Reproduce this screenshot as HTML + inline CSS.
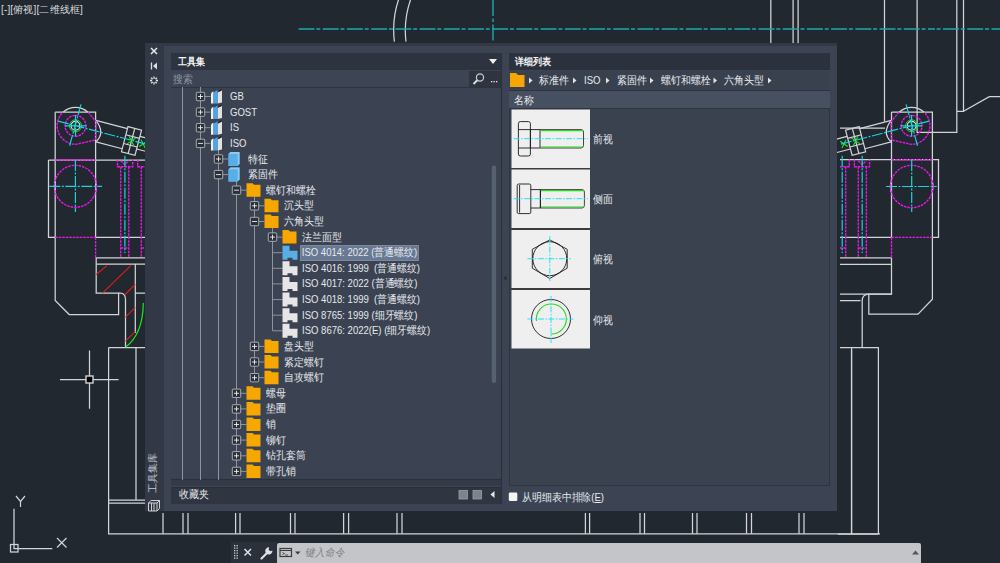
<!DOCTYPE html>
<html><head><meta charset="utf-8">
<style>
*{box-sizing:border-box}
html,body{margin:0;padding:0}
body{width:1000px;height:563px;overflow:hidden;background:#212830;position:relative;font-family:"Liberation Sans",sans-serif;color:#e8eaee}
.abs{position:absolute}
svg.ov{position:absolute;left:0;top:0}
.vlabel{position:absolute;left:1px;top:3.5px;letter-spacing:0.15px;font-size:10px;line-height:12px;color:#d8dadd;white-space:nowrap}
#pal{position:absolute;left:145px;top:43px;width:692px;height:468px;background:#323845}
#body{position:absolute;left:164px;top:46px;width:673px;height:465px;background:#3c4454}
.bar{position:absolute}
.txt{position:absolute;white-space:nowrap;font-size:10.6px;line-height:13px;color:#e8eaee;transform:scaleX(0.9);transform-origin:0 50%}
.txt.b{font-weight:bold;color:#f4f4f4;font-size:10px}
.tr{position:absolute;white-space:nowrap;font-size:10.6px;line-height:13px;color:#e6e8ec;transform:scaleX(0.9);transform-origin:0 50%}
.tr.sel{background:#697993;border:1px solid #7a89a2;padding:0 1px;margin-left:-2px;height:15.5px;line-height:13.5px;margin-top:-1.2px}
</style></head>
<body>
<svg class="ov" width="1000" height="563" viewBox="0 0 1000 563">
<defs>
<g id="arm" fill="none">
 <g stroke="#d2d4d8" stroke-width="1.2">
  <path d="M18.3,-10.4H51M23.8,10.4H51"/>
  <path d="M18.3,-10.4Q31,-1 23.8,10.4"/>
  <path d="M51,-12.5H65V13.5H51Z M58,-12.5V13.5 M51,-4H65 M51,5H65"/>
  <path d="M65,-6H85M65,7H85"/>
 </g>
 <g stroke="#1ee81e" stroke-width="1.1"><path d="M54.5,-3.5L61.5,4.5M61.5,-3.5L54.5,4.5M67,-3L73,4M73,-3L67,4"/></g>
</g>
<g id="cam" fill="none">
 <path d="M63,112.2A18.6,18.6 0 0 1 88,112.2" stroke="#d2d4d8" stroke-width="1.2"/>
 <g stroke="#ea16ea" stroke-width="1.35" stroke-dasharray="2.6 0.9">
  <path d="M88,112.2L96,121.5L95.5,140L76,144.3A18.6,18.6 0 0 1 63,112.2"/>
  <circle cx="75.5" cy="125.8" r="10.4"/>
 </g>
 <circle cx="75.5" cy="125.8" r="6" stroke="#2ad82a" stroke-width="1"/>
 <circle cx="75.5" cy="125.8" r="4.4" stroke="#e8e8e8" stroke-width="1.1"/>
 <g stroke="#16d6dc" stroke-width="1.2" stroke-dasharray="11 1.5 2 1.5">
  <path d="M81,104.3L69.2,147.2"/>
  <path d="M65,125.8H86.5M75.5,115V136.5"/>
 </g>
</g>
</defs>
<g fill="none" stroke="#d2d4d8" stroke-width="1.25">
 <!-- top arcs -->
 <path d="M398.6,-0.5C395,10 392.3,24 394.4,41.6"/>
 <path d="M410.6,-0.5C407,10 403.8,24 406,41.6"/>
 <path d="M770.8,0V43M793.1,0V43M798.1,0V43"/>
 <!-- LEFT SIDE -->
 <path d="M55.2,112.2V300.5L69.2,314.5H118.6V293.2H96.2V257.9"/>
 <path d="M55.2,112.2H95.6V237.4"/>
 <path d="M48.5,160V237.4H55.2M95.6,237.4H145M48.5,160H145"/>
 <path d="M95.6,257.9H145M96.2,264.2H145M135.3,264.2V333.1M135.3,293.2H145"/>
 <path d="M118.6,293.2H120.2Q125.5,293.2 125.5,299.4V347.5"/>
 <path d="M108.6,347.6H145M108.6,347.6V533.8H880M136,347.6V500M108.6,500H145M108.6,503H145"/>
 <path d="M163,513V533.8M183,513V533.8M188,513V533.8M235.6,513V533.8M240,513V533.8M290.5,513V533.8M295,513V533.8M343.6,513V533.8M348.6,513V533.8M397,513V533.8M402,513V533.8M585.4,513V533.8M589.6,513V533.8M640,513V533.8M644.5,513V533.8M692.5,513V533.8M697,513V533.8M746.5,513V533.8M751.5,513V533.8M799,513V533.8M804,513V533.8"/>
 <!-- crosshair -->
 <path d="M60,379.5H86M93,379.5H118.6M89.5,350.5V376M89.5,383V408.7"/>
 <rect x="86" y="376" width="7" height="7" stroke-width="1.4" fill="#000"/>
 <!-- UCS -->
 <path d="M14,508.7V548.5H52.3"/>
 <rect x="10.5" y="544.5" width="7.5" height="7.5"/>
 <path d="M16,496L20.5,501.5L25,496M20.5,501.5V507" stroke-width="1.2"/>
 <path d="M57,538L66.5,547.5M66.5,538L57,547.5" stroke-width="1.2"/>
 <!-- RIGHT SIDE -->
 <path d="M884.5,0V121.5M885,128.2H840M917.1,0V132.3H956.8V0M963.5,0V111.3H956.8M963.5,111.3L989.3,96.6H1000"/>
 <path d="M891.5,112H932.4V299.3L918,314.1H868.8V294.1H891.5V257.8M891.5,112V237.3"/>
 <path d="M840,159.7H938.5V237.3H932.4M891.5,237.3H840"/>
 <path d="M891.2,181A21.2,21.2 0 0 0 891.2,192M932.2,181A21.2,21.2 0 0 1 932.2,192" stroke-width="1.5"/>
 <path d="M840,257.8H891.5M840,264.3H891.5M840,294.1H891.5M840,300.7H860.5"/>
 <path d="M868.8,294.1Q862.2,294.1 862.2,301V347.7"/>
 <path d="M840,347.7H879M851.6,347.7V534M878.4,347.7V534M838,534H878.4"/>
 <path d="M851.5,350V534"/>
 <path d="M55.2,181A21,21 0 0 0 55.2,191.6M95.6,181A21,21 0 0 1 95.6,191.6" stroke-width="1.5"/>
</g>
<use href="#arm" transform="translate(75.5,125.8) rotate(14.6)"/>
<use href="#arm" transform="translate(911.6,125.8) scale(-1,1) rotate(14.6)"/>
<use href="#cam"/>
<use href="#cam" transform="translate(987.1,0) scale(-1,1)"/>
<!-- magenta dashed -->
<g fill="none" stroke="#ea16ea" stroke-width="1.35" stroke-dasharray="2.6 0.9">
 <circle cx="75.4" cy="186.3" r="21"/>
 <path d="M55.2,160H95.6M55.2,237.4H95.6M95.6,237.4V257.9"/>
 <path d="M117.5,159.6V166.7H132.7V159.6M120.7,166.7V257.7M128.8,166.7V257.7M120.7,160.7L124.8,164.5L128.8,160.7M120.7,248H128.8"/>
 <path d="M137.7,159.6V166.7H145M141.3,166.7V257.7M141.3,248H145"/>
 <circle cx="911.7" cy="186.5" r="21.2"/>
 <path d="M891.5,159.7H932.4M891.5,237.3H932.4M891.5,237.3V257.8"/>
 <path d="M854.4,159.6V166.7H869.6V159.6M858.3,166.7V257.7M866.4,166.7V257.7M858.3,160.7L862.3,164.5L866.4,160.7M858.3,248H866.4"/>
 <path d="M849.3,159.6V166.7H840M845.7,166.7V257.7M840,248H845.7"/>
</g>
<!-- green -->
<g fill="none" stroke="#1ee81e" stroke-width="1.2">
 <path d="M143.3,303Q143,334 125.5,347.3"/>
</g>
<!-- red hatch -->
<g stroke="#e01e1e" stroke-width="1.1">
 <path d="M96.2,274.5L106.9,265.6M102.4,293.2L130.8,265.6M124.6,295L135.3,284.3M125.5,317.1L135.3,307.4M125.5,341.1L135.3,331.3"/>
</g>
<!-- cyan -->
<g fill="none" stroke="#16d6dc" stroke-width="1.2" stroke-dasharray="11 1.5 2 1.5">
 <path d="M58,121.1L145,143.8"/>
 <path d="M49.3,186.3H102M75.4,160V212"/>
 <path d="M124.9,155.7V253"/>
 <path d="M929,121.1L840,144.3"/>
 <path d="M886,186.5H936.8M911.7,160V212"/>
 <path d="M842.2,155.7V253M862.2,155.7V253"/>
</g>
<path d="M298.5,29H935" stroke="#1aa9ad" stroke-width="1.6" stroke-dasharray="16 1.8 4 2.41" fill="none"/><path d="M935,29H1000" stroke="#1aa9ad" stroke-width="1.6" stroke-dasharray="16 1.8 4 2.41" stroke-dashoffset="16.21" fill="none"/>
<path d="M493,0V43" stroke="#1aa9ad" stroke-width="1.4" stroke-dasharray="16 2.5 3.5 2.5" fill="none"/>

</svg>
<div class="vlabel">[-][俯视][二维线框]</div>
<div id="pal"></div>
<div id="body"></div>
<!-- left panel -->
<div class="bar" style="left:171px;top:53px;width:330px;height:17px;background:#2e343f"></div>
<div class="txt b" style="left:178px;top:55px">工具集</div>
<div class="abs" style="left:489px;top:59px;width:0;height:0;border-left:4.5px solid transparent;border-right:4.5px solid transparent;border-top:5px solid #f0f0f0"></div>
<div class="bar" style="left:171px;top:70.5px;width:330px;height:16.5px;background:#3d4555"></div><div class="bar" style="left:171px;top:87px;width:330px;height:1px;background:#2e343f"></div>
<div class="txt" style="left:173px;top:73px;color:#8f96a0">搜索</div>
<div class="bar" style="left:469px;top:70.5px;width:32px;height:16.5px;background:#2f3540"></div>
<div class="bar" style="left:171px;top:88px;width:330px;height:391px;background:#3b4352"></div>
<div class="bar" style="left:171px;top:479px;width:330px;height:1.2px;background:#2a303a"></div><div class="bar" style="left:171px;top:480.2px;width:330px;height:6.3px;background:#343a47"></div>
<div class="bar" style="left:171px;top:486.5px;width:330px;height:17px;background:#2f3541;border-top:1px solid #2a303a"></div>
<div class="txt" style="left:179px;top:488px">收藏夹</div>
<!-- right panel -->
<div class="bar" style="left:509px;top:53px;width:321px;height:17px;background:#2c323d"></div>
<div class="txt b" style="left:515px;top:55px">详细列表</div>
<div class="bar" style="left:509px;top:70.5px;width:321px;height:18.5px;background:#39414f"></div>
<div class="bar" style="left:509px;top:89.5px;width:321px;height:1.5px;background:#2c323d"></div>
<div class="bar" style="left:509px;top:91px;width:321px;height:17px;background:#465061"></div>
<div class="bar" style="left:509px;top:108px;width:321px;height:1px;background:#2e3440"></div>
<div class="bar" style="left:509px;top:109px;width:321px;height:377px;background:#3a4250;border-left:1px solid #2e3440;border-right:1px solid #2e3440;border-bottom:1px solid #2e3440"></div>
<div class="txt" style="left:514px;top:94px">名称</div>
<!-- breadcrumb -->
<svg class="ov" width="1000" height="563" viewBox="0 0 1000 563">
<path d="M510,73 H516 L518,75 H524.5 V87 H510Z" fill="#f7a800"/>
<g fill="#e0e2e6">
<path d="M529,77.5L532.5,80.5L529,83.5Z"/>
<path d="M573,77.5L576.5,80.5L573,83.5Z"/>
<path d="M606,77.5L609.5,80.5L606,83.5Z"/>
<path d="M650,77.5L653.5,80.5L650,83.5Z"/>
<path d="M713.5,77.5L717,80.5L713.5,83.5Z"/>
<path d="M768,77.5L771.5,80.5L768,83.5Z"/>
</g>
<!-- search icon -->
<circle cx="480" cy="77.5" r="3.6" fill="none" stroke="#c9ccd2" stroke-width="1.2"/>
<path d="M477.5,80L473.5,84" stroke="#e0e2e6" stroke-width="1.8"/>
<g fill="#e8e8e8"><rect x="491" y="81" width="1.3" height="1.3"/><rect x="493.5" y="81" width="1.3" height="1.3"/><rect x="496" y="81" width="1.3" height="1.3"/></g>
<!-- scrollbar -->
<rect x="491.8" y="165.5" width="4.3" height="217.5" rx="2" fill="#566172"/>
<path d="M501.5,53V503.5" stroke="#2c323d" stroke-width="1.2"/>
<path d="M506.5,275.5L503.5,278.2L506.5,281Z" fill="#262b33"/>
<!-- left strip icons -->
<g stroke="#e8e8e8" stroke-width="1.5" fill="none">
<path d="M151,48L157,54M157,48L151,54"/>
</g>
<path d="M151.5,62.5V69.5" stroke="#e0e0e0" stroke-width="1.3"/>
<path d="M157,62.5L153,66L157,69.5Z" fill="#e0e0e0"/>
<g stroke="#e8e8e8" stroke-width="1.3"><path d="M150,80.5H158M154,76.5V84.5M151.2,77.7L156.8,83.3M156.8,77.7L151.2,83.3"/></g>
<circle cx="154" cy="80.5" r="2" fill="#31373f"/>
<!-- bottom cube icon -->
<g fill="none" stroke="#d0d0d0" stroke-width="1"><path d="M148.5,503L151,500.5H159.5V508.5L157,511H148.5Z M148.5,503H157V511M157,503L159.5,500.5M151.5,503V511M154,503V511"/></g>
<!-- fav icons -->
<rect x="459" y="490.5" width="8.5" height="8.5" fill="#7d838c" stroke="#9aa0a8" stroke-width="0.8"/>
<rect x="473" y="490.5" width="8.5" height="8.5" fill="#7d838c" stroke="#9aa0a8" stroke-width="0.8"/>
<path d="M494.5,491L490.5,494.5L494.5,498Z" fill="#eaeaea"/>
<!-- checkbox -->
<rect x="508.8" y="492.5" width="8.5" height="8.5" rx="1.2" fill="#f4f4f4"/>
</svg>
<div class="txt" style="left:539px;top:74px">标准件</div>
<div class="txt" style="left:583.5px;top:74px">ISO</div>
<div class="txt" style="left:616.5px;top:74px">紧固件</div>
<div class="txt" style="left:660.5px;top:74px">螺钉和螺栓</div>
<div class="txt" style="left:724px;top:74px">六角头型</div>
<div class="txt" style="left:522px;top:490.5px">从明细表中排除(<u>E</u>)</div>
<div class="txt" style="left:146px;top:493px;transform:rotate(-90deg);transform-origin:0 0;font-size:9.5px;color:#c8ccd2">工具集库</div>
<!-- command line -->
<div class="bar" style="left:231px;top:541.5px;width:46px;height:21.5px;background:#2b313b"></div>
<div class="bar" style="left:276.5px;top:542.8px;width:644px;height:20.2px;background:#c4c5c8;border-radius:2px 2px 0 0"></div>
<svg class="ov" width="1000" height="563" viewBox="0 0 1000 563">
<g fill="#cfd2d6"><rect x="234" y="545" width="1.3" height="1.3"/><rect x="236.5" y="545" width="1.3" height="1.3"/><rect x="234" y="547.5" width="1.3" height="1.3"/><rect x="236.5" y="547.5" width="1.3" height="1.3"/><rect x="234" y="550" width="1.3" height="1.3"/><rect x="236.5" y="550" width="1.3" height="1.3"/><rect x="234" y="552.5" width="1.3" height="1.3"/><rect x="236.5" y="552.5" width="1.3" height="1.3"/><rect x="234" y="555" width="1.3" height="1.3"/><rect x="236.5" y="555" width="1.3" height="1.3"/><rect x="234" y="557.5" width="1.3" height="1.3"/><rect x="236.5" y="557.5" width="1.3" height="1.3"/></g>
<path d="M244.5,549L251,555.5M251,549L244.5,555.5" stroke="#e0e2e6" stroke-width="1.5"/>
<path d="M261.5,558.5L267.5,552.5" stroke="#dfe1e5" stroke-width="2.2" stroke-linecap="round"/>
<path d="M269.2,547.3A3.6,3.6 0 1 0 272.4,550.5L270.2,551.2L268.6,549.4Z" fill="#dfe1e5"/>
<rect x="280" y="548.5" width="11.5" height="8" fill="none" stroke="#3c3c3c" stroke-width="1.2"/>
<path d="M280,550.5H291.5" stroke="#3c3c3c" stroke-width="1"/>
<path d="M282.5,552.5L284.5,553.5L282.5,554.5M285,555H288" stroke="#3c3c3c" stroke-width="0.8" fill="none"/>
<path d="M295,551.5H300.5L297.75,554.5Z" fill="#3c3c3c"/>
<path d="M912,554.5L915.5,550.5L919,554.5Z" fill="#555"/>
</svg>
<div class="txt" style="left:306px;top:546px;color:#7c7f85;transform:scaleX(0.9) skewX(-12deg)">键入命令</div>

<svg class="ov" width="1000" height="563" viewBox="0 0 1000 563">
<defs>
<symbol id="plus" overflow="visible"><rect x="-4.2" y="-4.2" width="8.4" height="8.4" rx="0.8" fill="#2a2f38" stroke="#bcc0c6" stroke-width="0.85"/><path d="M-2.5,0H2.5M0,-2.5V2.5" stroke="#eeeeee" stroke-width="0.9"/></symbol>
<symbol id="minus" overflow="visible"><rect x="-4.2" y="-4.2" width="8.4" height="8.4" rx="0.8" fill="#2a2f38" stroke="#bcc0c6" stroke-width="0.85"/><path d="M-2.5,0H2.5" stroke="#eeeeee" stroke-width="0.9"/></symbol>
<symbol id="book" overflow="visible"><path d="M0.5,-3 Q1.5,-5 3,-5 V7 H0.5Z" fill="#eef0f2"/><path d="M7,-4 L11.5,-6 V6 L7,7Z" fill="#e4e2de"/><path d="M3,-4 L7,-6.5 V7 H3Z" fill="#4aa6e6"/><path d="M8,-5 L11,-7" stroke="#111" stroke-width="1"/></symbol>
<symbol id="bbox" overflow="visible"><path d="M0,-5 L2,-7 H11 V5 L9,7 H0Z" fill="#5aaee8"/><path d="M2,-7 H11 V5 L9,7 V-5 H0Z" fill="#8fcaf2"/><rect x="0" y="-5" width="9" height="12" fill="#5aaee8"/></symbol>
<symbol id="folder" overflow="visible"><path d="M0,-7 H6 L7.5,-5.5 H14 V6.5 H0Z" fill="#f7a800"/></symbol>
<symbol id="bbolt" overflow="visible"><path d="M0,-7 H7 V-2 H15 V7 H10 V5 H5 V7 H0Z" fill="#5aaee8"/></symbol>
<symbol id="wbolt" overflow="visible"><path d="M0,-7 H7 V-2 H15 V7 H10 V5 H5 V7 H0Z" fill="#e6e6e6"/></symbol>
</defs>
<path d="M182.5,87V480M200.5,87V480M218.5,143.4V480M236.5,174.6V471.4M254.5,190.2V377.7M272.5,221.5V330.8" stroke="#8e949d" stroke-width="1"/><path d="M200.5,96.5H210.5" stroke="#8e949d" stroke-width="1"/><use href="#plus" x="200.5" y="96.5"/><use href="#book" x="210.5" y="96.5"/><path d="M200.5,112.1H210.5" stroke="#8e949d" stroke-width="1"/><use href="#plus" x="200.5" y="112.1"/><use href="#book" x="210.5" y="112.1"/><path d="M200.5,127.7H210.5" stroke="#8e949d" stroke-width="1"/><use href="#plus" x="200.5" y="127.7"/><use href="#book" x="210.5" y="127.7"/><path d="M200.5,143.4H210.5" stroke="#8e949d" stroke-width="1"/><use href="#minus" x="200.5" y="143.4"/><use href="#book" x="210.5" y="143.4"/><path d="M218.5,159.0H228.5" stroke="#8e949d" stroke-width="1"/><use href="#plus" x="218.5" y="159.0"/><use href="#bbox" x="228.5" y="159.0"/><path d="M218.5,174.6H228.5" stroke="#8e949d" stroke-width="1"/><use href="#minus" x="218.5" y="174.6"/><use href="#bbox" x="228.5" y="174.6"/><path d="M236.5,190.2H246.5" stroke="#8e949d" stroke-width="1"/><use href="#minus" x="236.5" y="190.2"/><use href="#folder" x="246.5" y="190.2"/><path d="M254.5,205.8H264.5" stroke="#8e949d" stroke-width="1"/><use href="#plus" x="254.5" y="205.8"/><use href="#folder" x="264.5" y="205.8"/><path d="M254.5,221.5H264.5" stroke="#8e949d" stroke-width="1"/><use href="#minus" x="254.5" y="221.5"/><use href="#folder" x="264.5" y="221.5"/><path d="M272.5,237.1H282.5" stroke="#8e949d" stroke-width="1"/><use href="#plus" x="272.5" y="237.1"/><use href="#folder" x="282.5" y="237.1"/><path d="M272.5,252.7H282.5" stroke="#8e949d" stroke-width="1"/><use href="#bbolt" x="282.5" y="252.7"/><path d="M272.5,268.3H282.5" stroke="#8e949d" stroke-width="1"/><use href="#wbolt" x="282.5" y="268.3"/><path d="M272.5,283.9H282.5" stroke="#8e949d" stroke-width="1"/><use href="#wbolt" x="282.5" y="283.9"/><path d="M272.5,299.6H282.5" stroke="#8e949d" stroke-width="1"/><use href="#wbolt" x="282.5" y="299.6"/><path d="M272.5,315.2H282.5" stroke="#8e949d" stroke-width="1"/><use href="#wbolt" x="282.5" y="315.2"/><path d="M272.5,330.8H282.5" stroke="#8e949d" stroke-width="1"/><use href="#wbolt" x="282.5" y="330.8"/><path d="M254.5,346.4H264.5" stroke="#8e949d" stroke-width="1"/><use href="#plus" x="254.5" y="346.4"/><use href="#folder" x="264.5" y="346.4"/><path d="M254.5,362.0H264.5" stroke="#8e949d" stroke-width="1"/><use href="#plus" x="254.5" y="362.0"/><use href="#folder" x="264.5" y="362.0"/><path d="M254.5,377.7H264.5" stroke="#8e949d" stroke-width="1"/><use href="#plus" x="254.5" y="377.7"/><use href="#folder" x="264.5" y="377.7"/><path d="M236.5,393.3H246.5" stroke="#8e949d" stroke-width="1"/><use href="#plus" x="236.5" y="393.3"/><use href="#folder" x="246.5" y="393.3"/><path d="M236.5,408.9H246.5" stroke="#8e949d" stroke-width="1"/><use href="#plus" x="236.5" y="408.9"/><use href="#folder" x="246.5" y="408.9"/><path d="M236.5,424.5H246.5" stroke="#8e949d" stroke-width="1"/><use href="#plus" x="236.5" y="424.5"/><use href="#folder" x="246.5" y="424.5"/><path d="M236.5,440.1H246.5" stroke="#8e949d" stroke-width="1"/><use href="#plus" x="236.5" y="440.1"/><use href="#folder" x="246.5" y="440.1"/><path d="M236.5,455.8H246.5" stroke="#8e949d" stroke-width="1"/><use href="#plus" x="236.5" y="455.8"/><use href="#folder" x="246.5" y="455.8"/><path d="M236.5,471.4H246.5" stroke="#8e949d" stroke-width="1"/><use href="#plus" x="236.5" y="471.4"/><use href="#folder" x="246.5" y="471.4"/>
</svg>
<div class="tr" style="left:229.5px;top:90.0px">GB</div><div class="tr" style="left:229.5px;top:105.6px">GOST</div><div class="tr" style="left:229.5px;top:121.2px">IS</div><div class="tr" style="left:229.5px;top:136.9px">ISO</div><div class="tr" style="left:247.5px;top:152.5px">特征</div><div class="tr" style="left:247.5px;top:168.1px">紧固件</div><div class="tr" style="left:265.5px;top:183.7px">螺钉和螺栓</div><div class="tr" style="left:283.5px;top:199.3px">沉头型</div><div class="tr" style="left:283.5px;top:215.0px">六角头型</div><div class="tr" style="left:301.5px;top:230.6px">法兰面型</div><div class="tr sel" style="left:301.5px;top:246.2px">ISO 4014: 2022 (普通螺纹)</div><div class="tr" style="left:301.5px;top:261.8px">ISO 4016: 1999 &nbsp;(普通螺纹)</div><div class="tr" style="left:301.5px;top:277.4px">ISO 4017: 2022 (普通螺纹)</div><div class="tr" style="left:301.5px;top:293.1px">ISO 4018: 1999 &nbsp;(普通螺纹)</div><div class="tr" style="left:301.5px;top:308.7px">ISO 8765: 1999 (细牙螺纹)</div><div class="tr" style="left:301.5px;top:324.3px">ISO 8676: 2022(E) (细牙螺纹)</div><div class="tr" style="left:283.5px;top:339.9px">盘头型</div><div class="tr" style="left:283.5px;top:355.5px">紧定螺钉</div><div class="tr" style="left:283.5px;top:371.2px">自攻螺钉</div><div class="tr" style="left:265.5px;top:386.8px">螺母</div><div class="tr" style="left:265.5px;top:402.4px">垫圈</div><div class="tr" style="left:265.5px;top:418.0px">销</div><div class="tr" style="left:265.5px;top:433.6px">铆钉</div><div class="tr" style="left:265.5px;top:449.3px">钻孔套筒</div><div class="tr" style="left:265.5px;top:464.9px">带孔销</div>
<svg class="ov" width="1000" height="563" viewBox="0 0 1000 563">
<g>
<rect x="511.5" y="109" width="78.5" height="240" fill="#3b3c40"/>
<rect x="511.5" y="109.5" width="78.5" height="58.5" fill="#efefef"/>
<rect x="511.5" y="169.5" width="78.5" height="58.5" fill="#efefef"/>
<rect x="511.5" y="230" width="78.5" height="58" fill="#efefef"/>
<rect x="511.5" y="290" width="78.5" height="58.5" fill="#efefef"/>
</g>
<g fill="none" stroke="#1a1a1a" stroke-width="0.9">
 <!-- front view -->
 <rect x="518.4" y="121.6" width="12" height="34.4" rx="2"/>
 <path d="M518.4,129.6H540M518.4,148H540"/>
 <path d="M530.4,129.6V148M540,129.6V148"/>
 <path d="M540,129.6H581Q583.5,129.6 583.5,132V145.5Q583.5,148 581,148H540" stroke="#3a2a2a"/>
 <!-- side view -->
 <rect x="517.2" y="184" width="13.6" height="29.6" rx="1.5"/>
 <path d="M519.6,185V212.6"/>
 <path d="M530.8,189.6H540.4V208H530.8M540.4,189.6V208"/>
 <path d="M540.4,189.6H582Q584.4,189.6 584.4,192V205.5Q584.4,208 582,208H540.4" stroke="#3a2a2a"/>
 <!-- top view -->
 <path d="M549.8,239.9L567.2,249.3V268.2L549.8,278.5L532.3,268.2V249.3Z"/>
 <circle cx="549.8" cy="258.7" r="17"/>
 <!-- bottom view -->
 <circle cx="551" cy="319" r="19.5"/>
</g>
<g fill="none" stroke="#22dd22" stroke-width="1.1">
 <path d="M540.5,130.6H583M540.5,147H583"/>
 <path d="M540.9,190.6H584M540.9,207H584"/>
 <path d="M536.5,321 A15,15 0 1 1 551,334"/>
</g>
<g fill="none" stroke="#22e3ee" stroke-width="1" stroke-dasharray="6 1.5 1.5 1.5">
 <path d="M513.6,138.7H588"/>
 <path d="M513.6,198.7H588"/>
 <path d="M527.4,258.7H570.9M549.8,236.2V281"/>
 <path d="M527.4,319H573.4M551,295.9V343"/>
</g>
</svg>
<div class="txt" style="left:593px;top:132.5px">前视</div>
<div class="txt" style="left:593px;top:192.5px">侧面</div>
<div class="txt" style="left:593px;top:252.5px">俯视</div>
<div class="txt" style="left:593px;top:313.5px">仰视</div>

</body></html>
